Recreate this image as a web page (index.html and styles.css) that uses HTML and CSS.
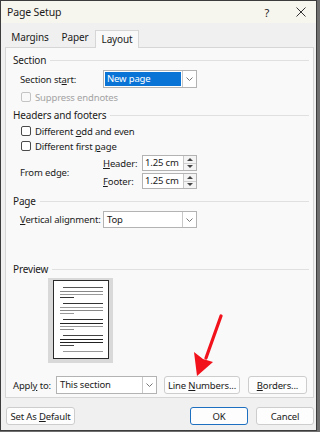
FILE: index.html
```html
<!DOCTYPE html>
<html lang="en">

<head>
    <meta charset="UTF-8">
    <title>Page Setup</title>
    <link rel="stylesheet" href="styles.css">
</head>

<body>
    <div class="window">
        <div class="titlebar">
            <span class="title">Page Setup</span>
            <span class="help">?</span>
            <svg class="close" width="10" height="10" viewBox="0 0 10 10">
                <path d="M0.5 0.5 L9.5 9.5 M9.5 0.5 L0.5 9.5" stroke="#333" stroke-width="1" fill="none" />
            </svg>
        </div>

        <div class="tabs">
            <span class="tab tab-margins">Margins</span>
            <span class="tab tab-paper">Paper</span>
            <span class="tab tab-layout active">Layout</span>
        </div>

        <div class="panel">
            <div class="group">Section</div>
            <div class="row indent">
                <span class="lbl">Section st<u>a</u>rt:</span>
                <div class="select select-start">
                    <span class="value highlight">New page</span>
                    <span class="drop"><svg width="7" height="4" viewBox="0 0 7 4"><path d="M0.5 0.5 L3.5 3.5 L6.5 0.5" stroke="#777" fill="none" /></svg></span>
                </div>
            </div>
            <div class="check disabled gap-suppress"><span class="box"></span><span>Suppress endnotes</span></div>

            <div class="group gap-headers">Headers and footers</div>
            <div class="check gap-odd"><span class="box"></span><span>Different <u>o</u>dd and even</span></div>
            <div class="check gap-first"><span class="box"></span><span>Different first <u>p</u>age</span></div>

            <div class="edge">
                <span class="lbl">From edge:</span>
                <div class="spins">
                    <div class="spinrow">
                        <span class="spinlbl"><u>H</u>eader:</span>
                        <div class="spin"><span class="value">1.25 cm</span><span class="arrows"><i class="up"></i><i class="down"></i></span></div>
                    </div>
                    <div class="spinrow">
                        <span class="spinlbl"><u>F</u>ooter:</span>
                        <div class="spin"><span class="value">1.25 cm</span><span class="arrows"><i class="up"></i><i class="down"></i></span></div>
                    </div>
                </div>
            </div>

            <div class="group gap-page">Page</div>
            <div class="row indent gap-valign">
                <span class="lbl"><u>V</u>ertical alignment:</span>
                <div class="select select-valign">
                    <span class="value">Top</span>
                    <span class="drop"><svg width="7" height="4" viewBox="0 0 7 4"><path d="M0.5 0.5 L3.5 3.5 L6.5 0.5" stroke="#777" fill="none" /></svg></span>
                </div>
            </div>

            <div class="group gap-preview">Preview</div>
            <div class="preview">
                <div class="page">
                    <svg width="54" height="77" viewBox="0 0 54 77">
                        <g stroke-width="1" shape-rendering="crispEdges">
                            <line x1="9" y1="6.5" x2="49" y2="6.5" stroke="#555" />
                            <line x1="6" y1="10.5" x2="49" y2="10.5" stroke="#888" />
                            <line x1="6" y1="13.5" x2="49" y2="13.5" stroke="#999" />
                            <line x1="6" y1="16.5" x2="20" y2="16.5" stroke="#333" />

                            <line x1="9" y1="22.5" x2="49" y2="22.5" stroke="#333" />
                            <line x1="6" y1="26.5" x2="49" y2="26.5" stroke="#999" />
                            <line x1="6" y1="29.5" x2="49" y2="29.5" stroke="#888" />
                            <line x1="6" y1="32.5" x2="20" y2="32.5" stroke="#999" />

                            <line x1="9" y1="38.5" x2="49" y2="38.5" stroke="#333" />
                            <line x1="6" y1="42.5" x2="49" y2="42.5" stroke="#222" />
                            <line x1="6" y1="45.5" x2="49" y2="45.5" stroke="#999" />
                            <line x1="6" y1="48.5" x2="20" y2="48.5" stroke="#888" />

                            <line x1="9" y1="54.5" x2="49" y2="54.5" stroke="#444" />
                            <line x1="6" y1="58.5" x2="49" y2="58.5" stroke="#222" />
                            <line x1="6" y1="61.5" x2="49" y2="61.5" stroke="#222" />
                            <line x1="6" y1="64.5" x2="20" y2="64.5" stroke="#444" />

                            <line x1="9" y1="70.5" x2="49" y2="70.5" stroke="#999" />
                        </g>
                    </svg>
                </div>
            </div>

            <div class="apply">
                <span class="apply-lbl">Appl<u>y</u> to:</span>
                <div class="select select-apply">
                    <span class="value">This section</span>
                    <span class="drop"><svg width="7" height="4" viewBox="0 0 7 4"><path d="M0.5 0.5 L3.5 3.5 L6.5 0.5" stroke="#777" fill="none" /></svg></span>
                </div>
                <button class="btn btn-lines">Line <u>N</u>umbers...</button>
                <button class="btn btn-borders"><u>B</u>orders...</button>
            </div>
        </div>

        <div class="footer">
            <button class="btn btn-default">Set As <u>D</u>efault</button>
            <button class="btn btn-ok">OK</button>
            <button class="btn btn-cancel">Cancel</button>
        </div>

        <svg class="arrow" width="40" height="64" viewBox="0 0 40 64">
            <line x1="30" y1="2" x2="15" y2="44" stroke="#f2121b" stroke-width="3.2" stroke-linecap="round" />
            <polygon points="6,62 3,38 12,45 22,48" fill="#f2121b" />
        </svg>
    </div>
</body>

</html>
```

FILE: styles.css
```css
body {
    margin: 0;
    background-color: #6f6f6f;
    font-family: 'Noto Sans', 'Open Sans', sans-serif;
    font-size: 9.5px;
    letter-spacing: -0.15px;
    color: #1b1b1b;
    white-space: nowrap;
}

u {
    text-decoration-thickness: 1px;
    text-underline-offset: 1px;
}

.window {
    position: relative;
    box-sizing: border-box;
    width: 317px;
    height: 431px;
    background-color: #f0f0f0;
    border: 1px solid #3c3c3c;
}

.titlebar {
    display: flex;
    align-items: center;
    height: 22px;
    padding-left: 6px;
    background-color: #f7f6ee;
    font-size: 10.5px;
}

.title {
    flex: 1;
}

.help {
    margin-right: 27px;
    font-size: 11px;
}

.close {
    margin-right: 10px;
}

/* tabs */
.tabs {
    display: flex;
    align-items: flex-end;
    height: 24px;
    padding-left: 4px;
    font-size: 10px;
}

.tab {
    box-sizing: border-box;
    height: 18px;
    line-height: 17px;
    text-align: center;
}

.tab-margins {
    width: 50px;
}

.tab-paper {
    width: 40px;
}

.tab-layout {
    width: 44px;
}

.tab.active {
    position: relative;
    top: 1px;
    background-color: #f9f9f9;
    border: 1px solid #d6d6d6;
    border-bottom: none;
}

.panel {
    box-sizing: border-box;
    width: 309px;
    height: 351px;
    margin-left: 4px;
    padding: 5px 0 0 7px;
    background-color: #f9f9f9;
    border: 1px solid #d6d6d6;
}

.group {
    display: flex;
    align-items: center;
    height: 14px;
    line-height: 14px;
    font-size: 10px;
}

.group::after {
    content: "";
    flex: 1;
    height: 1px;
    margin: 0 4px 0 4px;
    background-color: #e0e0e0;
}

.row {
    display: flex;
    align-items: center;
    height: 18px;
    margin-top: 3px;
}

.indent {
    padding-left: 7px;
}

.lbl {
    width: 83px;
}

/* select boxes */
.select {
    box-sizing: border-box;
    display: flex;
    height: 18px;
    background-color: white;
    border: 1px solid #b3b3b3;
}

.select .value {
    flex: 1;
    line-height: 16px;
    padding-left: 3px;
}

.select .highlight {
    margin: 1px;
    line-height: 14px;
    padding-left: 2px;
    background-color: #0a74d6;
    color: white;
}

.drop {
    display: flex;
    align-items: center;
    justify-content: center;
    width: 13px;
    border-left: 1px solid #c8c8c8;
}

.select-start,
.select-valign {
    width: 94px;
}

.select-apply {
    width: 101px;
}

/* checkboxes */
.check {
    display: flex;
    align-items: center;
    height: 14px;
    padding-left: 8px;
}

.check .box {
    box-sizing: border-box;
    width: 10px;
    height: 10px;
    margin-right: 4px;
    background-color: white;
    border: 1px solid #4a4a4a;
    border-radius: 2px;
}

.check.disabled {
    color: #a3a3a3;
}

.check.disabled .box {
    border-color: #c4c4c4;
    background-color: #f9f9f9;
}

.gap-suppress {
    margin-top: 2px;
}

.gap-headers {
    margin-top: 4px;
}

.gap-odd {
    margin-top: 2px;
}

.gap-first {
    margin-top: 1px;
}

/* header/footer spinners */
.edge {
    display: flex;
    align-items: center;
    margin-top: 2px;
    padding-left: 7px;
}

.spins {
    display: flex;
    flex-direction: column;
    gap: 2px;
}

.spinrow {
    display: flex;
    align-items: center;
}

.spinlbl {
    width: 39px;
}

.spin {
    box-sizing: border-box;
    display: flex;
    width: 55px;
    height: 16px;
    background-color: white;
    border: 1px solid #b3b3b3;
}

.spin .value {
    flex: 1;
    line-height: 14px;
    padding-left: 2px;
}

.arrows {
    display: flex;
    flex-direction: column;
    width: 12px;
    border-left: 1px solid #c8c8c8;
    background-color: #f4f4f4;
}

.arrows i {
    flex: 1;
    display: flex;
    align-items: center;
    justify-content: center;
}

.arrows .up {
    border-bottom: 1px solid #cfcfcf;
}

.arrows .up::before {
    content: "";
    border-left: 3px solid transparent;
    border-right: 3px solid transparent;
    border-bottom: 3px solid #444;
}

.arrows .down::before {
    content: "";
    border-left: 3px solid transparent;
    border-right: 3px solid transparent;
    border-top: 3px solid #444;
}

.gap-page {
    margin-top: 5px;
}

.gap-valign {
    margin-top: 3px;
    height: 17px;
}

.gap-valign .select {
    height: 17px;
}

.gap-preview {
    margin-top: 34px;
}

/* preview page */
.preview {
    box-sizing: border-box;
    width: 65px;
    height: 85px;
    margin: 2px 0 0 35px;
    padding: 2px 0 0 5px;
    background-color: #d9d9d9;
}

.page {
    box-sizing: border-box;
    width: 56px;
    height: 79px;
    background-color: white;
    border: 1px solid #2a2a2a;
}

.page svg {
    display: block;
}

/* apply row */
.apply {
    display: flex;
    align-items: center;
    margin-top: 13px;
}

.apply-lbl {
    width: 43px;
}

.btn {
    box-sizing: border-box;
    height: 18px;
    padding: 0;
    font-family: inherit;
    font-size: 9.5px;
    letter-spacing: -0.15px;
    color: #1b1b1b;
    white-space: nowrap;
    background-color: #fdfdfd;
    border: 1px solid #cdcdcd;
    border-radius: 3px;
}

.btn-lines {
    width: 76px;
    margin-left: 7px;
}

.btn-borders {
    width: 59px;
    margin-left: 8px;
}

.footer {
    display: flex;
    align-items: center;
    margin-top: 9px;
    padding: 0 2px 0 5px;
}

.btn-default {
    width: 69px;
}

.btn-ok {
    width: 58px;
    margin-left: auto;
    border-color: #1d6fc0;
}

.btn-cancel {
    width: 58px;
    margin-left: 8px;
}

.arrow {
    position: absolute;
    left: 190px;
    top: 313px;
}
```
